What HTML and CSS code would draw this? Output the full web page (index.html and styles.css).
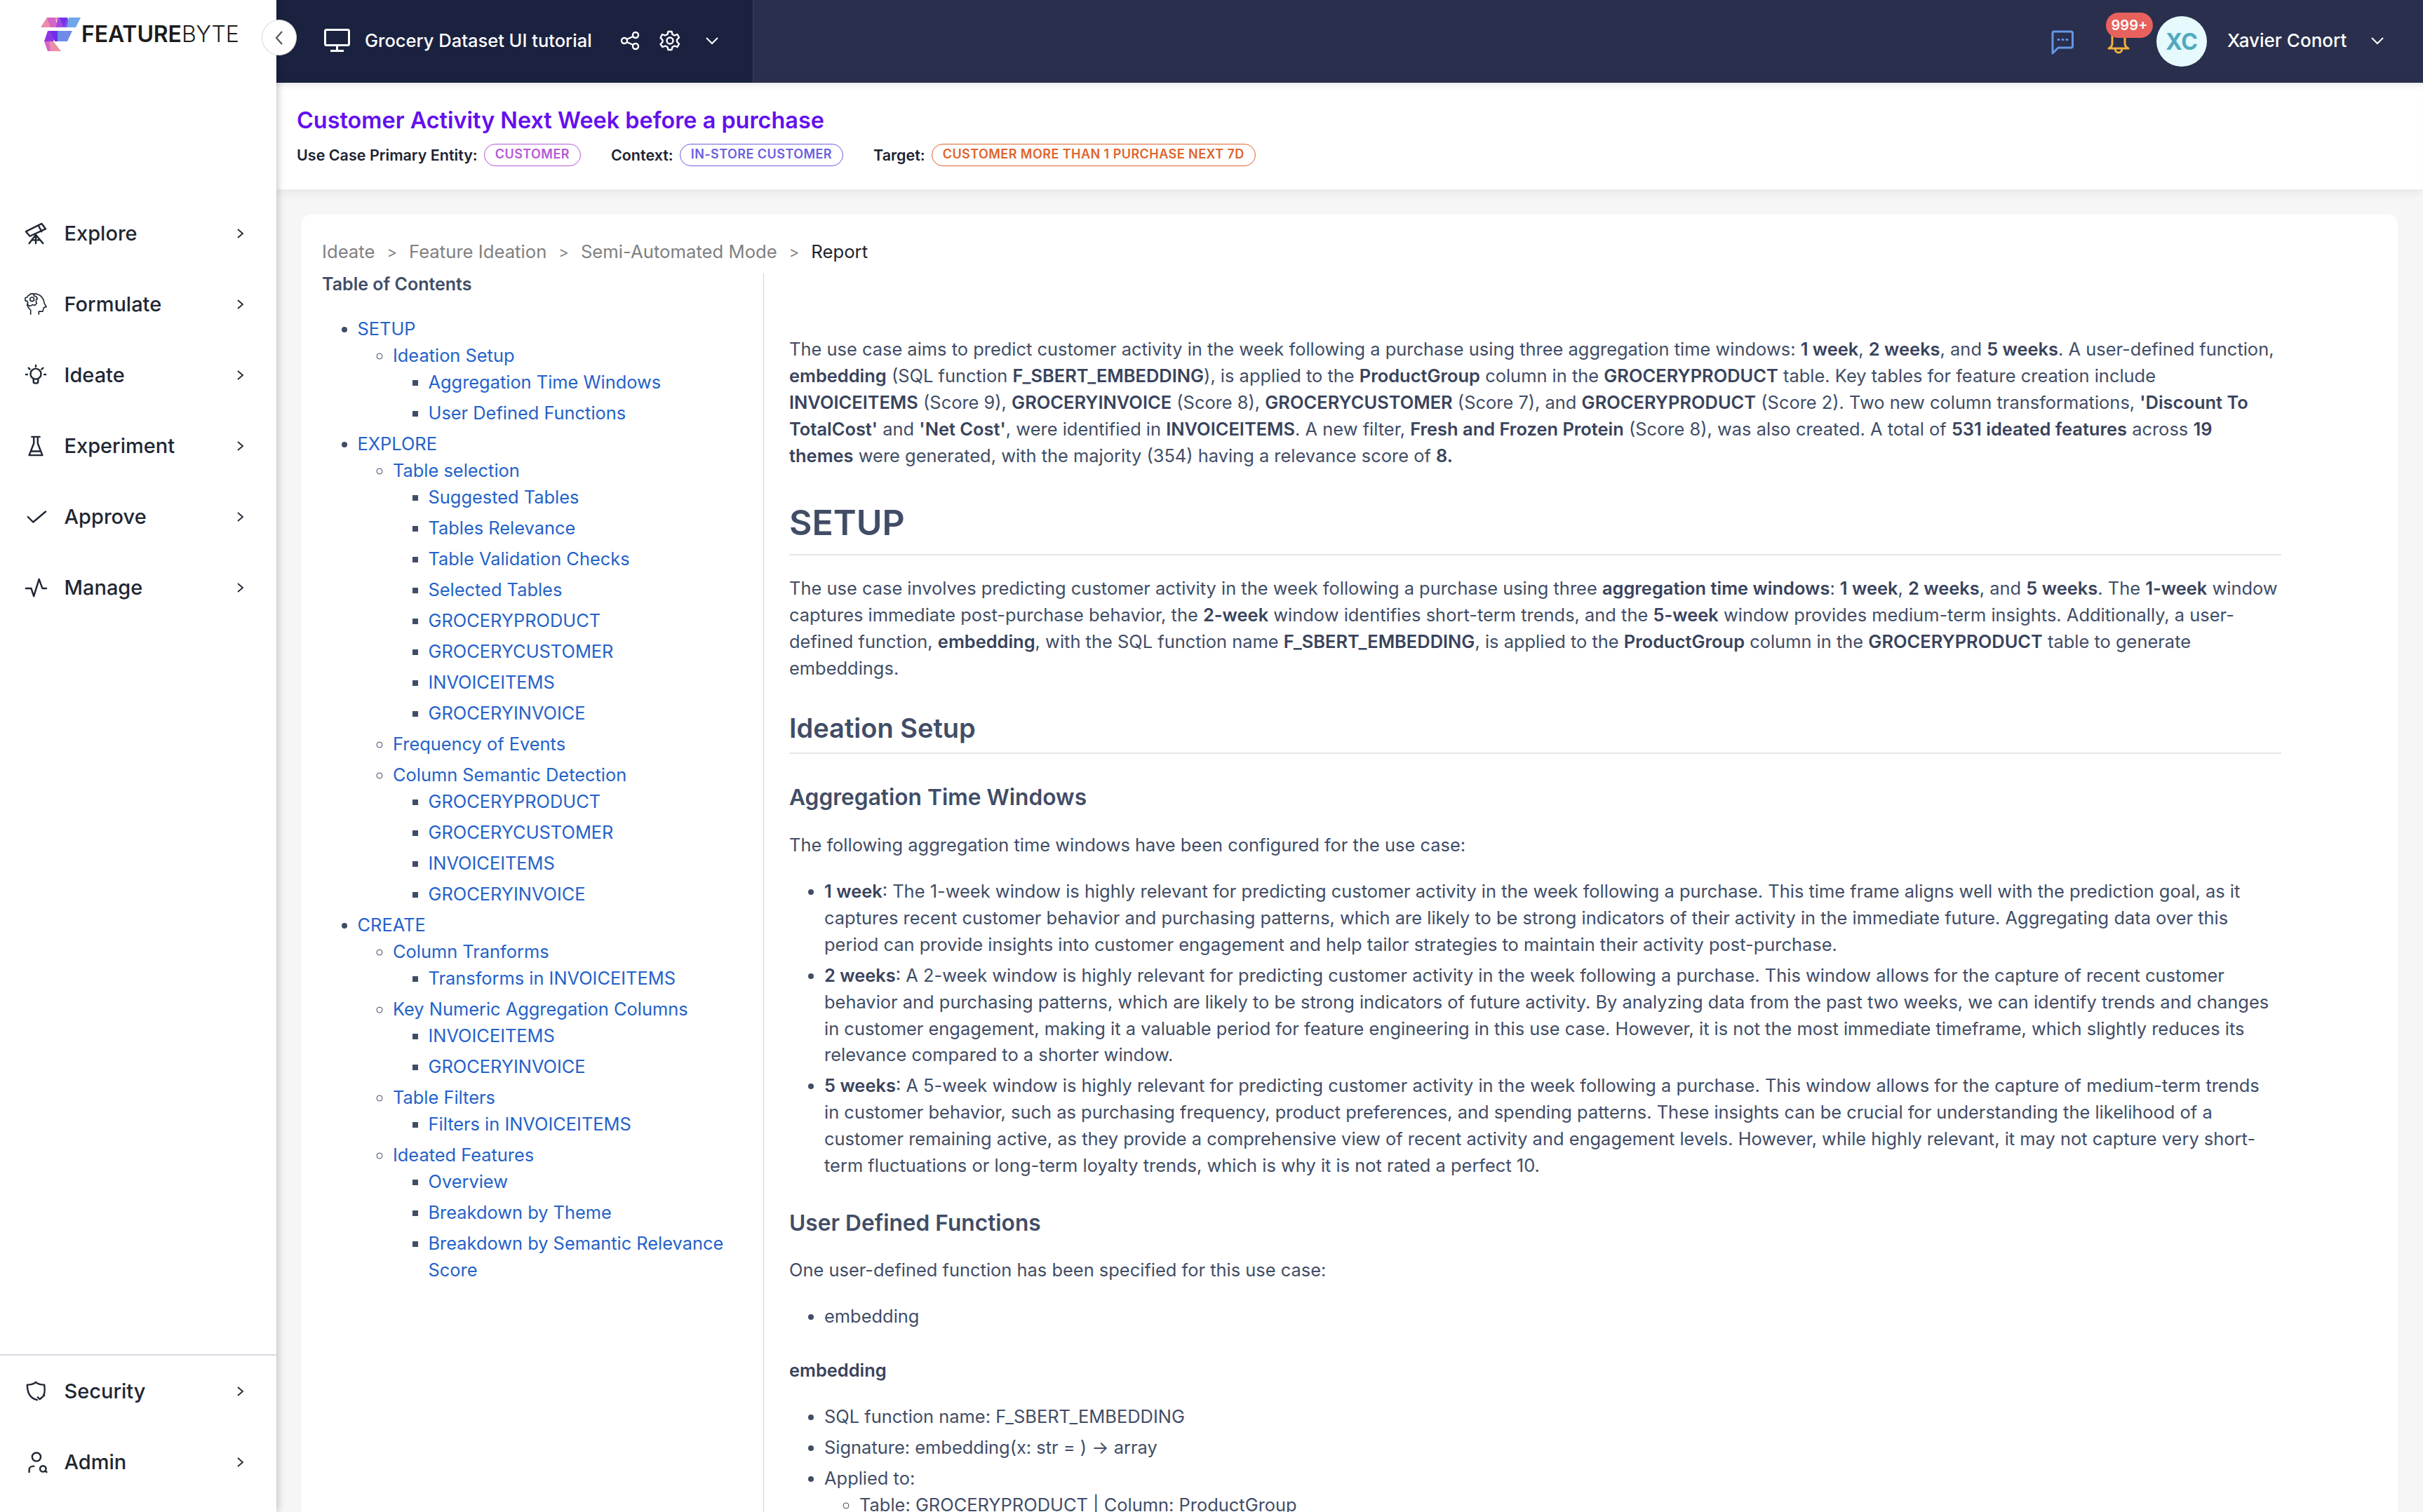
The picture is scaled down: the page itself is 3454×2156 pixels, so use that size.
FILE: index.html
```html
<!DOCTYPE html>
<html lang="en">
<head>
<meta charset="utf-8">
<title>FeatureByte</title>
<link rel="stylesheet" href="styles.css">
</head>
<body>
<div class="app">
  <aside class="sidebar">
    <div class="logo">
      <svg class="logo-mark" viewBox="0 0 58 48" width="58" height="48">
        <polygon points="9,0 24,0 19,14 0,14" fill="#e88fa6"/>
        <polygon points="9,0 20,0 25,14 14,14" fill="#d765c9"/>
        <polygon points="24,0 38,0 33,14 22,14" fill="#a24ae0"/>
        <polygon points="27,0 33,14 44,14 38,0" fill="#6a2fe6" opacity=".85"/>
        <polygon points="40,0 57,0 50,14 37,14" fill="#6ea6ea"/>
        <polygon points="10,19 22,19 18,34 5,34" fill="#8f35e4"/>
        <polygon points="14,19 26,19 29,34 20,34" fill="#6a2fe6"/>
        <polygon points="24,19 45,19 38,34 24,34" fill="#6f8bea"/>
        <polygon points="5,34 18,34 14,48 10,48" fill="#d765c9"/>
        <polygon points="12,34 18,34 29,48 14,48" fill="#e88fa6"/>
      </svg>
      <span class="logo-text"><b>FEATURE</b>BYTE</span>
    </div>
    <nav class="nav">
      <a class="nav-item"><svg class="nav-icon" viewBox="0 0 32 32"><path d="M1 13 25 1l6 8-24 11zM20 4l5 9M16 18 6 31M16 18v13M16 18l11 13M10 26h12"/></svg><span>Explore</span><svg class="nav-chev" viewBox="0 0 10 14"><path d="M1 1l7 6-7 6"/></svg></a>
      <a class="nav-item"><svg class="nav-icon thin" viewBox="0 0 34 34"><path d="M10 32v-6c-3-3-6-6-5-9M22 32v-4h5c2 0 1-6 3-6l3-1-3-5C29 7 23 2 15 2"/><circle cx="12" cy="10" r="3"/><path d="M10 2h4l1 3 3 1 2 3-2 2v3l1 2-3 3-3-1-2 1-3 1-3-3 1-2-1-2-3-1V8l3-1 1-2 2-1z"/></svg><span>Formulate</span><svg class="nav-chev" viewBox="0 0 10 14"><path d="M1 1l7 6-7 6"/></svg></a>
      <a class="nav-item"><svg class="nav-icon" viewBox="0 0 32 32"><circle cx="16" cy="14" r="8"/><path d="M12.500 22v4c0 3 7 3 7 0v-4M16 1v2M5 5l2 2M27 5l-2 2M1 15h2M29 15h2"/></svg><span>Ideate</span><svg class="nav-chev" viewBox="0 0 10 14"><path d="M1 1l7 6-7 6"/></svg></a>
      <a class="nav-item"><svg class="nav-icon" viewBox="0 0 32 32"><path d="M10 2h12M13 2v10L6 30h20l-7-18V2M9 24h14"/></svg><span>Experiment</span><svg class="nav-chev" viewBox="0 0 10 14"><path d="M1 1l7 6-7 6"/></svg></a>
      <a class="nav-item"><svg class="nav-icon" viewBox="0 0 32 32"><path d="M4 16l8 8L31 8"/></svg><span>Approve</span><svg class="nav-chev" viewBox="0 0 10 14"><path d="M1 1l7 6-7 6"/></svg></a>
      <a class="nav-item"><svg class="nav-icon" viewBox="0 0 32 32"><path d="M1 17h8l4 12 8-26 5 14h6"/></svg><span>Manage</span><svg class="nav-chev" viewBox="0 0 10 14"><path d="M1 1l7 6-7 6"/></svg></a>
    </nav>
    <nav class="nav nav-bottom">
      <a class="nav-item"><svg class="nav-icon" viewBox="0 0 32 32"><path d="M16 2c3 3 8 4 13 4 1 9 1 13-1 15M18 29c-8-2-15-8-15-23 5 0 10-1 13-4"/><path d="M19 25l3 3 7-6"/></svg><span>Security</span><svg class="nav-chev" viewBox="0 0 10 14"><path d="M1 1l7 6-7 6"/></svg></a>
      <a class="nav-item"><svg class="nav-icon" viewBox="0 0 32 32"><circle cx="17" cy="8" r="6.500"/><path d="M6 31v-4c0-3 3-5 7-5"/><circle cx="27" cy="26" r="4.500"/><path d="M30.500 29.500l2 1.500"/></svg><span>Admin</span><svg class="nav-chev" viewBox="0 0 10 14"><path d="M1 1l7 6-7 6"/></svg></a>
    </nav>
  </aside>

  <button class="collapse" aria-label="Collapse"><svg viewBox="0 0 14 20" width="14" height="20"><path d="M11 1 3 10l8 9"/></svg></button>

  <div class="main">
    <header class="topbar">
      <div class="project">
        <svg class="monitor" viewBox="0 0 37 33" width="37" height="33"><rect x="1.500" y="1.500" width="34" height="22" rx="2"/><path d="M18.500 24v6M9 31.500h19"/></svg>
        <span class="project-name">Grocery Dataset UI tutorial</span>
        <svg class="share" viewBox="0 0 28 28" width="28" height="28"><circle cx="6" cy="14" r="4"/><circle cx="22" cy="6" r="4"/><circle cx="22" cy="22" r="4"/><path d="M9.500 12 18.500 8M9.500 16l9 4"/></svg>
        <svg class="gear" viewBox="0 0 30 30" width="30" height="30"><circle cx="15" cy="15" r="4.500"/><path d="M12.500 2h5l1 4 3 1.500 4-1.500 2.500 4.500-3 3v3l3 3-2.500 4.500-4-1.500-3 1.500-1 4h-5l-1-4-3-1.500-4 1.500L1.500 20l3-3v-3l-3-3L4 6l4 1.500 3.500-1.500z"/></svg>
        <svg class="chev" viewBox="0 0 18 10" width="18" height="10"><path d="M1 1l8 8 8-8"/></svg>
      </div>
      <div class="user">
        <svg class="chat" viewBox="0 0 32 34" width="32" height="34"><path d="M4 2h24a2.500 2.500 0 0 1 2.500 2.500v18A2.500 2.500 0 0 1 28 25H10l-8 8V4a2 2 0 0 1 2-2z"/><path class="dots" d="M10 13.500h1M16 13.500h1M22 13.500h1"/></svg>
        <div class="bell-wrap">
          <svg class="bell" viewBox="0 0 32 28" width="32" height="28"><path d="M7 2v12c0 3-1 5-5 7h28c-4-2-5-4-5-7V2M11 21c0 8 10 8 10 0"/></svg>
          <span class="badge">999+</span>
        </div>
        <span class="avatar">XC</span>
        <span class="user-name">Xavier Conort</span>
        <svg class="chev" viewBox="0 0 18 10" width="18" height="10"><path d="M1 1l8 8 8-8"/></svg>
      </div>
    </header>

    <section class="usecase">
      <h1 class="usecase-title">Customer Activity Next Week before a purchase</h1>
      <div class="usecase-meta">
        <span class="meta-label">Use Case Primary Entity:</span><span class="pill pill-entity">CUSTOMER</span>
        <span class="meta-label meta-gap">Context:</span><span class="pill pill-context">IN-STORE CUSTOMER</span>
        <span class="meta-label meta-gap">Target:</span><span class="pill pill-target">CUSTOMER MORE THAN 1 PURCHASE NEXT 7D</span>
      </div>
    </section>

    <div class="content">
      <div class="card">
        <div class="crumbs">
          <span>Ideate</span><i>&gt;</i><span>Feature Ideation</span><i>&gt;</i><span>Semi-Automated Mode</span><i>&gt;</i><span class="current">Report</span>
        </div>
        <div class="report">
          <div class="toc">
            <div class="toc-title">Table of Contents</div>
            <ul>
              <li><a>SETUP</a>
                <ul>
                  <li><a>Ideation Setup</a>
                    <ul>
                      <li><a>Aggregation Time Windows</a></li>
                      <li><a>User Defined Functions</a></li>
                    </ul>
                  </li>
                </ul>
              </li>
              <li><a>EXPLORE</a>
                <ul>
                  <li><a>Table selection</a>
                    <ul>
                      <li><a>Suggested Tables</a></li>
                      <li><a>Tables Relevance</a></li>
                      <li><a>Table Validation Checks</a></li>
                      <li><a>Selected Tables</a></li>
                      <li><a>GROCERYPRODUCT</a></li>
                      <li><a>GROCERYCUSTOMER</a></li>
                      <li><a>INVOICEITEMS</a></li>
                      <li><a>GROCERYINVOICE</a></li>
                    </ul>
                  </li>
                  <li><a>Frequency of Events</a></li>
                  <li><a>Column Semantic Detection</a>
                    <ul>
                      <li><a>GROCERYPRODUCT</a></li>
                      <li><a>GROCERYCUSTOMER</a></li>
                      <li><a>INVOICEITEMS</a></li>
                      <li><a>GROCERYINVOICE</a></li>
                    </ul>
                  </li>
                </ul>
              </li>
              <li><a>CREATE</a>
                <ul>
                  <li><a>Column Tranforms</a>
                    <ul>
                      <li><a>Transforms in INVOICEITEMS</a></li>
                    </ul>
                  </li>
                  <li><a>Key Numeric Aggregation Columns</a>
                    <ul>
                      <li><a>INVOICEITEMS</a></li>
                      <li><a>GROCERYINVOICE</a></li>
                    </ul>
                  </li>
                  <li><a>Table Filters</a>
                    <ul>
                      <li><a>Filters in INVOICEITEMS</a></li>
                    </ul>
                  </li>
                  <li><a>Ideated Features</a>
                    <ul>
                      <li><a>Overview</a></li>
                      <li><a>Breakdown by Theme</a></li>
                      <li><a>Breakdown by Semantic Relevance Score</a></li>
                    </ul>
                  </li>
                </ul>
              </li>
            </ul>
          </div>
          <article class="article">
            <p>The use case aims to predict customer activity in the week following a purchase using three aggregation time windows: <b>1 week</b>, <b>2 weeks</b>, and <b>5 weeks</b>. A user-defined function, <b>embedding</b> (SQL function <b>F_SBERT_EMBEDDING</b>), is applied to the <b>ProductGroup</b> column in the <b>GROCERYPRODUCT</b> table. Key tables for feature creation include <b>INVOICEITEMS</b> (Score 9), <b>GROCERYINVOICE</b> (Score 8), <b>GROCERYCUSTOMER</b> (Score 7), and <b>GROCERYPRODUCT</b> (Score 2). Two new column transformations, <b>'Discount To TotalCost'</b> and <b>'Net Cost'</b>, were identified in <b>INVOICEITEMS</b>. A new filter, <b>Fresh and Frozen Protein</b> (Score 8), was also created. A total of <b>531 ideated features</b> across <b>19 themes</b> were generated, with the majority (354) having a relevance score of <b>8.</b></p>
            <h1>SETUP</h1>
            <p>The use case involves predicting customer activity in the week following a purchase using three <b>aggregation time windows</b>: <b>1 week</b>, <b>2 weeks</b>, and <b>5 weeks</b>. The <b>1-week</b> window captures immediate post-purchase behavior, the <b>2-week</b> window identifies short-term trends, and the <b>5-week</b> window provides medium-term insights. Additionally, a user-defined function, <b>embedding</b>, with the SQL function name <b>F_SBERT_EMBEDDING</b>, is applied to the <b>ProductGroup</b> column in the <b>GROCERYPRODUCT</b> table to generate embeddings.</p>
            <h2>Ideation Setup</h2>
            <h3>Aggregation Time Windows</h3>
            <p>The following aggregation time windows have been configured for the use case:</p>
            <ul class="list-long">
              <li><b>1 week</b>: The 1-week window is highly relevant for predicting customer activity in the week following a purchase. This time frame aligns well with the prediction goal, as it captures recent customer behavior and purchasing patterns, which are likely to be strong indicators of their activity in the immediate future. Aggregating data over this period can provide insights into customer engagement and help tailor strategies to maintain their activity post-purchase.</li>
              <li><b>2 weeks</b>: A 2-week window is highly relevant for predicting customer activity in the week following a purchase. This window allows for the capture of recent customer behavior and purchasing patterns, which are likely to be strong indicators of future activity. By analyzing data from the past two weeks, we can identify trends and changes in customer engagement, making it a valuable period for feature engineering in this use case. However, it is not the most immediate timeframe, which slightly reduces its relevance compared to a shorter window.</li>
              <li><b>5 weeks</b>: A 5-week window is highly relevant for predicting customer activity in the week following a purchase. This window allows for the capture of medium-term trends in customer behavior, such as purchasing frequency, product preferences, and spending patterns. These insights can be crucial for understanding the likelihood of a customer remaining active, as they provide a comprehensive view of recent activity and engagement levels. However, while highly relevant, it may not capture very short-term fluctuations or long-term loyalty trends, which is why it is not rated a perfect 10.</li>
            </ul>
            <h3 class="h3-next">User Defined Functions</h3>
            <p>One user-defined function has been specified for this use case:</p>
            <ul>
              <li>embedding</li>
            </ul>
            <h4>embedding</h4>
            <ul class="list-tight">
              <li>SQL function name: F_SBERT_EMBEDDING</li>
              <li>Signature: embedding(x: str = ) → array</li>
              <li>Applied to:
                <ul>
                  <li>Table: GROCERYPRODUCT | Column: ProductGroup</li>
                </ul>
              </li>
            </ul>
          </article>
        </div>
      </div>
    </div>
  </div>
</div>
</body>
</html>
```

FILE: styles.css
```css
* { box-sizing: border-box; }
html, body { margin: 0; height: 100%; overflow: hidden; }
body { font-family: Inter, "Liberation Sans", sans-serif; background: #f6f6f6; color: #414d66; }
svg { fill: none; stroke: currentColor; flex: none; overflow: visible; }

.app { display: flex; height: 2156px; position: relative; }

/* sidebar */
.sidebar { width: 394px; flex: none; background: #fff; display: flex; flex-direction: column; box-shadow: 2px 0 10px rgba(0,0,0,.22); z-index: 2; }
.logo { height: 282px; padding: 25px 0 0 58px; display: flex; align-items: flex-start; }
.logo-mark { stroke: none; }
.logo-text { font-size: 32px; line-height: 30px; margin: 9px 0 0 0; font-weight: 300; color: #1c1c1c; letter-spacing: -.1px; }
.logo-text b { font-weight: 600; }
.nav-item { height: 101px; display: flex; align-items: center; padding: 0 46px 0 36px; font-size: 29px; font-weight: 500; color: #1f2733; }
.nav-item span { flex: 1; margin-left: 25.500px; }
.nav-icon { width: 30px; height: 30px; stroke-width: 2.6; stroke-linecap: round; stroke-linejoin: round; }
.nav-icon.thin { stroke-width: 1.7; width: 33px; height: 33px; margin-left: -2px; margin-right: -1px; }
.nav-chev { width: 10px; height: 14px; stroke-width: 1.8; }
.nav-bottom { margin-top: auto; border-top: 2px solid #d5dae0; padding-bottom: 21px; }

.collapse { position: absolute; left: 373px; top: 28px; width: 50px; height: 51px; border-radius: 50%; background: #fff; border: 1px solid #d8d8d8; padding: 0; display: flex; align-items: center; justify-content: center; color: #555; z-index: 3; }
.collapse svg { stroke-width: 2.2; }

/* main */
.main { flex: 1; min-width: 0; display: flex; flex-direction: column; height: 100%; }
.topbar { height: 118px; flex: none; display: flex; background: #292f4d; color: #fff; }
.project { width: 680px; background: #1b2240; border-right: 1px solid #3a4060; display: flex; align-items: center; padding: 0 0 3px 68px; }
.monitor { stroke-width: 3; }
.project-name { font-size: 25.500px; font-weight: 500; margin-left: 21px; }
.share { margin-left: 40px; stroke-width: 2.4; }
.gear { margin-left: 28px; stroke-width: 2.4; stroke-linejoin: round; }
.project .chev { margin-left: 36px; stroke-width: 2; }
.user { flex: 1; display: flex; align-items: center; padding: 0 0 3px 1850px; position: relative; }
.chat { color: #6597e6; stroke-width: 3; margin-right: 48px; margin-top: 4px; stroke-linejoin: round; }
.chat .dots { stroke-width: 3; stroke-linecap: round; }
.bell-wrap { position: relative; width: 32px; height: 28px; margin-top: 9px; }
.bell { color: #f0b03c; stroke-width: 3; stroke-linejoin: round; display: block; }
.badge { position: absolute; left: -2px; top: -30px; width: 67px; height: 36px; border-radius: 18px; background: #e8615d; color: #fff; font-size: 20px; font-weight: 600; line-height: 36px; text-align: center; }
.avatar { width: 72px; height: 72px; border-radius: 50%; background: #e6f9fc; color: #4faabf; font-size: 32px; font-weight: 700; display: flex; align-items: center; justify-content: center; margin-left: 38px; margin-top: 3px; }
.user-name { font-size: 26px; font-weight: 500; margin-left: 29px; }
.user .chev { margin-left: 35px; stroke-width: 2; }

.usecase { height: 152px; flex: none; background: #fff; padding: 31px 28px 0 29px; box-shadow: inset 0 9px 8px -5px #e9eaec, 0 3px 14px rgba(0,0,0,.08); }
.usecase-title { margin: 0; font-size: 32.400px; line-height: 46px; font-weight: 600; color: #6410ee; }
.usecase-meta { display: flex; align-items: center; margin-top: 10px; height: 32px; }
.meta-label { font-size: 21.500px; font-weight: 600; color: #1d2333; margin-right: 9px; }
.meta-gap { margin-left: 43px; }
.pill { height: 32px; border: 1.500px solid; border-radius: 16px; padding: 0 15px; font-size: 18px; font-weight: 600; line-height: 28px; letter-spacing: .45px; }
.pill-entity { color: #b658d8; border-color: #b658d8; }
.pill-context { color: #6a5fdf; border-color: #6a5fdf; }
.pill-target { color: #e0642c; border-color: #e0642c; }

.content { flex: 1; min-height: 0; padding: 36px 36px 0 36px; overflow: hidden; }
.card { background: #fff; border-radius: 14px 14px 0 0; height: 100%; padding: 34px 0 0 29px; overflow: hidden; }
.crumbs { display: flex; height: 50px; gap: 17px; font-size: 25.700px; line-height: 38px; color: #7f7f7f; }
.crumbs i { font-style: normal; font-size: 22px; }
.crumbs .current { color: #20242c; }

.report { display: flex; }
.toc { width: 630px; flex: none; padding-right: 32px; font-size: 25.400px; line-height: 38px; border-right: 1px solid #cfd3d8; min-height: 1500px; }
.toc-title { font-size: 25px; font-weight: 600; line-height: 30px; color: #414d66; margin-bottom: 29.500px; }
.toc ul { margin: 0; padding: 0 0 0 50.500px; list-style: disc; }
.toc ul ul { list-style: circle; }
.toc ul ul ul { list-style: square; }
.toc li + li { margin-top: 6px; }
.toc a { color: #2462c8; }
.toc li::marker { color: #414d66; }

.article { width: 2163px; flex: none; padding: 89px 0 0 36px; font-size: 25.450px; line-height: 38px; color: #414d66; }
.article p { margin: 0; padding-right: 3px; }
.article b { font-weight: 600; color: #39435c; }
.article h1 { font-size: 50px; line-height: 60px; font-weight: 600; margin: 46px 0 28px; padding-bottom: 15px; border-bottom: 2px solid #e5e7eb; }
.article h2 { font-size: 38px; line-height: 48px; font-weight: 600; margin: 42px 0 42px; padding-bottom: 11px; border-bottom: 2px solid #e5e7eb; }
.article h3 { font-size: 31.700px; line-height: 40px; font-weight: 600; margin: 0 0 29px; }
.article h3.h3-next { margin: 43px 0 28px; }
.article h4 { font-size: 25.450px; line-height: 38px; font-weight: 600; margin: 39px 0 23px; color: #39435c; }
.article ul { margin: 28px 0 0; padding: 0 3px 0 50px; list-style: disc; }
.article ul ul { margin: 0; padding-right: 0; list-style: circle; }
.article li + li { margin-top: 6px; }
.list-long li { line-height: 37.900px; }
```
